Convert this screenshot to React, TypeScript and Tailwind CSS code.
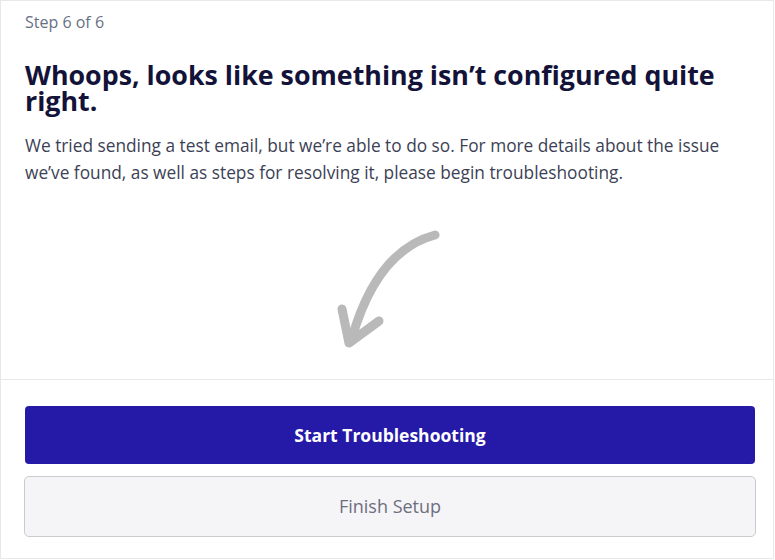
import React from "react";

function CurvedArrow() {
   return (
      <svg width="115" height="125" viewBox="3 0 115 125" fill="none" className="mx-auto">
         <path d="M105 9 C75 17 42 42 22 112" stroke="#b9b9b9" strokeWidth="9" strokeLinecap="round" />
         <path d="M12 83 L19 117 L49 95" stroke="#b9b9b9" strokeWidth="9" strokeLinecap="round" strokeLinejoin="round" />
      </svg>
   )
}

export default function App() {
   return (
      <div className="w-[774px] h-[559px] bg-white border border-[#e8e8ea] flex flex-col" style={{ fontFamily: '"Open Sans", "Noto Sans", sans-serif' }}>
         <div className="flex-1 pl-[24px] pr-[17px] pt-[11px]">
            <p className="text-[16px] leading-[20px] text-[#677186]">Step 6 of 6</p>
            <h1 className="mt-[30px] text-[26.8px] leading-[26px] font-bold text-[#131339]">
               Whoops, looks like something isn’t configured quite right.
            </h1>
            <p className="mt-[18px] text-[17.3px] leading-[27px] text-[#3c3f55]">
               We tried sending a test email, but we’re able to do so. For more details about the issue
               we’ve found, as well as steps for resolving it, please begin troubleshooting.
            </p>
            <div className="mt-[40px]">
               <CurvedArrow />
            </div>
         </div>
         <div className="border-t border-[#e8e8ea] pl-[23px] pr-[17px] pt-[26px] pb-[21px] flex flex-col gap-[12px]">
            <button className="h-[58px] ml-[1px] mr-[1px] rounded-[4px] bg-[#251aa8] text-white text-[17.5px] font-bold">
               Start Troubleshooting
            </button>
            <button className="h-[61px] w-full rounded-[5px] bg-[#f5f5f7] border border-[#cacacf] text-[#6e6e80] text-[18px]">
               Finish Setup
            </button>
         </div>
      </div>
   )
}
